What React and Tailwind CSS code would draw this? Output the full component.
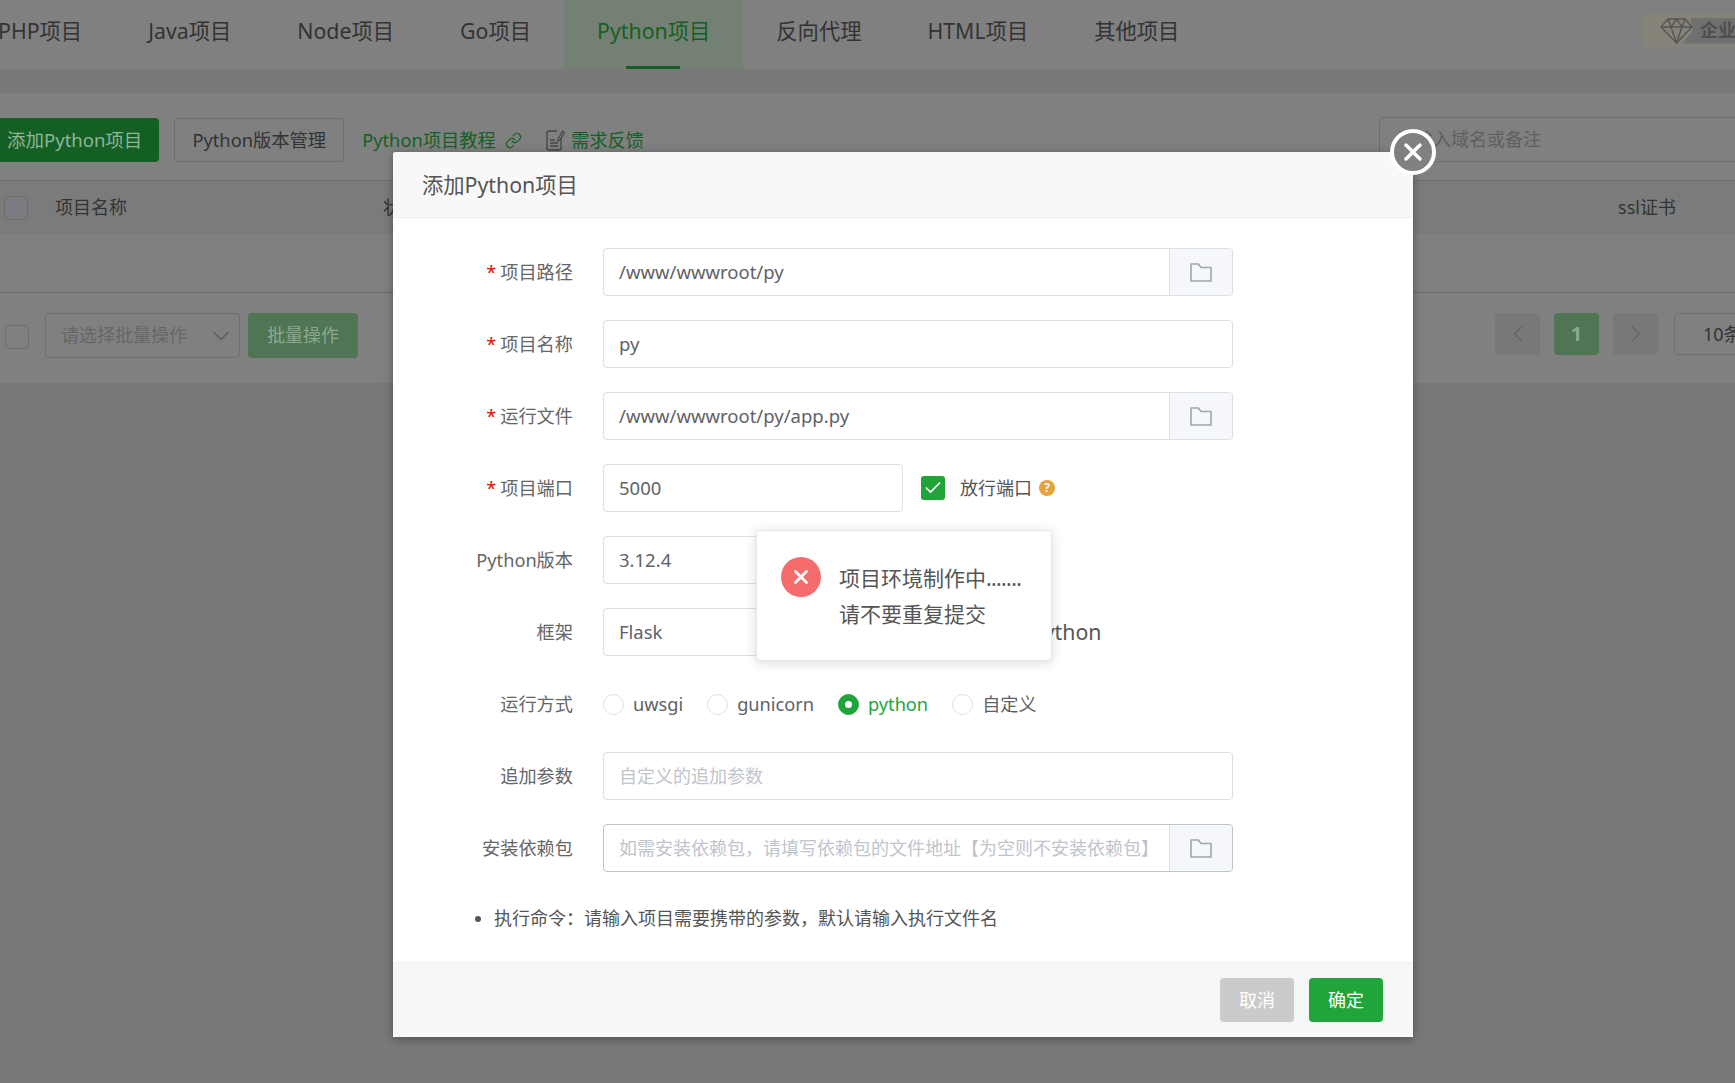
import { Check, ChevronDown, ChevronLeft, ChevronRight, Link, X } from "lucide-react";

const tabs = ["PHP项目", "Java项目", "Node项目", "Go项目", "Python项目", "反向代理", "HTML项目", "其他项目"];

function FolderIcon() {
  return (
    <svg width="22" height="19" viewBox="0 0 22 19" fill="none" stroke="#a3a6ad" strokeWidth="1.6">
      <path d="M1 1h7.500l2.500 3.500h10V18H1z" />
    </svg>
  );
}

function DiamondIcon() {
  return (
    <svg width="33" height="26" viewBox="0 0 33 26" fill="none" stroke="#555" strokeWidth="1.4" className="relative z-10 shrink-0">
      <path d="M8 1h17l7 8-15.500 16L1 9z" />
      <path d="M1 9h31M11 9l5.500 16L22 9M8 1l3 8 5.500-8L22 9l3-8" />
    </svg>
  );
}

function NoteIcon() {
  return (
    <svg width="19" height="22" viewBox="0 0 19 22" fill="none" stroke="#444" strokeWidth="1.3">
      <path d="M11 2H3a2 2 0 0 0-2 2v15a2 2 0 0 0 2 2h10a2 2 0 0 0 2-2V9" />
      <path d="M12 10l4-7a1 1 0 0 1 2 1l-4 7-2 1z" />
      <path d="M4 11h5M4 14h8M4 17h8" />
    </svg>
  );
}

function Row({ label, required, children }) {
  return (
    <div className="flex items-center h-12">
      <label className="w-[180px] mt-[1px] text-right text-[18.200px] text-[#666] whitespace-nowrap">
        {required && <span className="text-[#ef0808] mr-[4px]">*</span>}
        {label}
      </label>
      <div className="ml-[30px] flex items-center">{children}</div>
    </div>
  );
}

function TextInput({ value, placeholder, width, folder, dark }) {
  return (
    <div className={`flex h-12 ${width} rounded border ${dark ? "border-[#c0c4cc]" : "border-[#dcdfe6]"} bg-white overflow-hidden`}>
      <div className={`flex-1 flex items-center pl-[15px] whitespace-nowrap ${value ? "text-[18.500px] text-[#606266]" : "text-[18px] text-[#c0c4cc]"}`}>
        {value || placeholder}
      </div>
      {folder && (
        <div className="w-[63px] flex items-center justify-center bg-[#f5f7fa] border-l border-[#dcdfe6]">
          <FolderIcon />
        </div>
      )}
    </div>
  );
}

function Radio({ text, checked }) {
  return (
    <div className="flex items-center">
      <span className={`w-[21px] h-[21px] rounded-full border flex items-center justify-center ${checked ? "bg-[#20a53a] border-[#20a53a]" : "bg-white border-[#dcdfe6]"}`}>
        {checked && <span className="w-[7px] h-[7px] rounded-full bg-white"></span>}
      </span>
      <span className={`ml-[9px] text-[18.200px] ${checked ? "text-[#20a53a]" : "text-[#606266]"}`}>{text}</span>
    </div>
  );
}

export default function App() {
  return (
    <div className="relative h-screen overflow-hidden bg-[#787878] font-['Noto_Sans','Noto_Sans_CJK_SC',sans-serif]">
      <nav className="h-[69px] bg-[#808080] flex">
        <div className="flex ml-[-35px]">
          {tabs.map((t) => (
            <div
              key={t}
              className={`relative px-[33px] pb-[8px] flex items-center text-[21.300px] whitespace-nowrap ${t === "Python项目" ? "bg-[#748074] text-[#145f23]" : "text-[#333]"}`}
            >
              {t}
              {t === "Python项目" && <span className="absolute bottom-0 left-[62px] w-[54px] h-[3px] bg-[#145f23]"></span>}
            </div>
          ))}
        </div>
        <div className="ml-auto mt-[14px] w-[92px] h-[33px] rounded-l-md bg-[#868379] flex items-center overflow-hidden pl-[17px] whitespace-nowrap">
          <DiamondIcon />
          <span className="ml-[-11px] pl-[18px] h-[26px] flex-1 flex items-center bg-[#707070] text-[18px] text-[#4f4f4f] font-bold [clip-path:polygon(8px_0,100%_0,100%_100%,0_100%,11px_50%)]">企业版</span>
        </div>
      </nav>

      <section className="mt-6 h-[290px] bg-[#808080]">
        <div className="pt-[25px] flex items-center h-[69px]">
          <button className="ml-[-10px] h-11 px-[17px] rounded bg-[#145f23] text-[18.500px] text-[#8fb598] whitespace-nowrap">添加Python项目</button>
          <button className="ml-[15px] h-11 px-[17px] rounded border border-[#6e6e6e] text-[18.300px] text-[#333] whitespace-nowrap">Python版本管理</button>
          <span className="ml-[18px] text-[18.300px] text-[#145f23] whitespace-nowrap">Python项目教程</span>
          <Link size={17} strokeWidth={1.6} className="ml-[9px] text-[#145f23]" />
          <span className="ml-[24px]"><NoteIcon /></span>
          <span className="ml-[6px] text-[18.300px] text-[#145f23] whitespace-nowrap">需求反馈</span>
          <div className="ml-auto mr-[-20px] w-[376px] h-[45px] mt-[-1px] rounded border border-[#6e6e6e] flex items-center pl-[17px] text-[18px] text-[#5f5f5f] whitespace-nowrap">请输入域名或备注</div>
        </div>

        <div className="mt-[18px] h-[54px] bg-[#7b7b7b] border-t border-[#6e6e6e] flex items-center text-[18px] text-[#333]">
          <span className="ml-1 w-6 h-6 rounded border border-[#6e6e6e] bg-[#7a7b80]"></span>
          <span className="ml-[27px] w-[328px]">项目名称</span>
          <span>状态</span>
          <span className="ml-auto mr-[59px]">ssl证书</span>
        </div>

        <div className="h-[59px] border-b border-[#6e6e6e]"></div>

        <div className="flex pt-5 text-[18px]">
          <span className="ml-[5px] mt-3 w-6 h-6 rounded border border-[#6e6e6e]"></span>
          <div className="ml-4 w-[195px] h-[45px] rounded border border-[#6e6e6e] flex items-center justify-between pl-[15px] pr-[4px] text-[#666] whitespace-nowrap">
            请选择批量操作
            <ChevronDown size={28} strokeWidth={1.2} className="text-[#5a5a5a]" />
          </div>
          <button className="ml-2 w-[110px] h-[45px] rounded bg-[#4f7555] text-[#8da892] whitespace-nowrap">批量操作</button>
          <div className="ml-auto mr-[-20px] flex items-start gap-[14px]">
            <span className="w-[45px] h-[42px] rounded-sm bg-[#787878] flex items-center justify-center text-[#666]"><ChevronLeft size={28} strokeWidth={1.4} /></span>
            <span className="w-[45px] h-[42px] rounded-sm bg-[#4f7555] flex items-center justify-center text-[#8da892] font-bold text-[20px]">1</span>
            <span className="w-[45px] h-[42px] rounded-sm bg-[#787878] flex items-center justify-center text-[#666]"><ChevronRight size={28} strokeWidth={1.4} /></span>
            <span className="ml-[2px] w-[81px] h-[42px] rounded border border-[#6e6e6e] flex items-center pl-[28px] text-[#333] whitespace-nowrap">10条/页</span>
          </div>
        </div>
      </section>

      <div className="absolute left-[393px] top-[152px] w-[1020px] h-[885px] rounded-[3px] bg-white flex flex-col shadow-[0_2px_10px_rgba(0,0,0,0.35)]">
        <div className="h-[66px] pl-[29px] pt-[1px] flex items-center bg-[#f8f8f8] border-b border-[#eeeeee] text-[21.300px] text-[#555] rounded-t-[3px]">添加Python项目</div>

        <div className="flex-1 pt-[30px] flex flex-col gap-6">
          <Row label="项目路径" required><TextInput value="/www/wwwroot/py" width="w-[630px]" folder /></Row>
          <Row label="项目名称" required><TextInput value="py" width="w-[630px]" /></Row>
          <Row label="运行文件" required><TextInput value="/www/wwwroot/py/app.py" width="w-[630px]" folder /></Row>
          <Row label="项目端口" required>
            <TextInput value="5000" width="w-[300px]" />
            <span className="ml-[18px] w-6 h-6 rounded-[3px] bg-[#20a53a] flex items-center justify-center"><Check size={20} strokeWidth={2} className="text-white" /></span>
            <span className="ml-[15px] text-[18px] text-[#555]">放行端口</span>
            <span className="ml-[7px] w-4 h-4 rounded-full bg-[#e6a23c] flex items-center justify-center text-[12px] font-bold text-white">?</span>
          </Row>
          <Row label="Python版本"><TextInput value="3.12.4" width="w-[300px]" /></Row>
          <Row label="框架">
            <TextInput value="Flask" width="w-[300px]" />
            <span className="ml-[128px] text-[21.300px] text-[#555]">python</span>
          </Row>
          <Row label="运行方式">
            <div className="flex gap-6 mt-[1px]">
              <Radio text="uwsgi" />
              <Radio text="gunicorn" />
              <Radio text="python" checked />
              <Radio text="自定义" />
            </div>
          </Row>
          <Row label="追加参数"><TextInput placeholder="自定义的追加参数" width="w-[630px]" /></Row>
          <Row label="安装依赖包"><TextInput placeholder="如需安装依赖包，请填写依赖包的文件地址【为空则不安装依赖包】" width="w-[630px]" folder dark /></Row>
          <ul className="mt-[9px] ml-[101px] list-disc text-[18px] text-[#555] leading-[26px]">
            <li>执行命令：请输入项目需要携带的参数，默认请输入执行文件名</li>
          </ul>
        </div>

        <div className="h-[75px] bg-[#f6f8f8] border-t border-[#eeeeee] flex justify-end gap-[15px] pt-[15px] pr-[30px]">
          <button className="w-[74px] h-11 rounded bg-[#cbcbcb] text-[18px] text-white">取消</button>
          <button className="w-[74px] h-11 rounded bg-[#20a53a] text-[18px] text-white">确定</button>
        </div>

        <button className="absolute right-[-23px] top-[-23px] w-[46px] h-[46px] rounded-full border-4 border-white bg-[#808080] flex items-center justify-center">
          <X size={28} strokeWidth={3} className="text-white" />
        </button>

        <div className="absolute left-[363px] top-[378px] w-[296px] h-[131px] rounded border border-[#e4e7ed] bg-white shadow-[0_2px_12px_rgba(0,0,0,0.15)] flex pl-[24px] pt-[26px]">
          <span className="w-10 h-10 rounded-full bg-[#f56c6c] flex items-center justify-center shrink-0">
            <X size={22} strokeWidth={3} className="text-white" />
          </span>
          <div className="ml-[18px] mt-[3px] text-[21px] leading-9 text-[#555]">
            <p>项目环境制作中<span className="tracking-[-0.6px]">.......</span></p>
            <p>请不要重复提交</p>
          </div>
        </div>
      </div>
    </div>
  );
}
